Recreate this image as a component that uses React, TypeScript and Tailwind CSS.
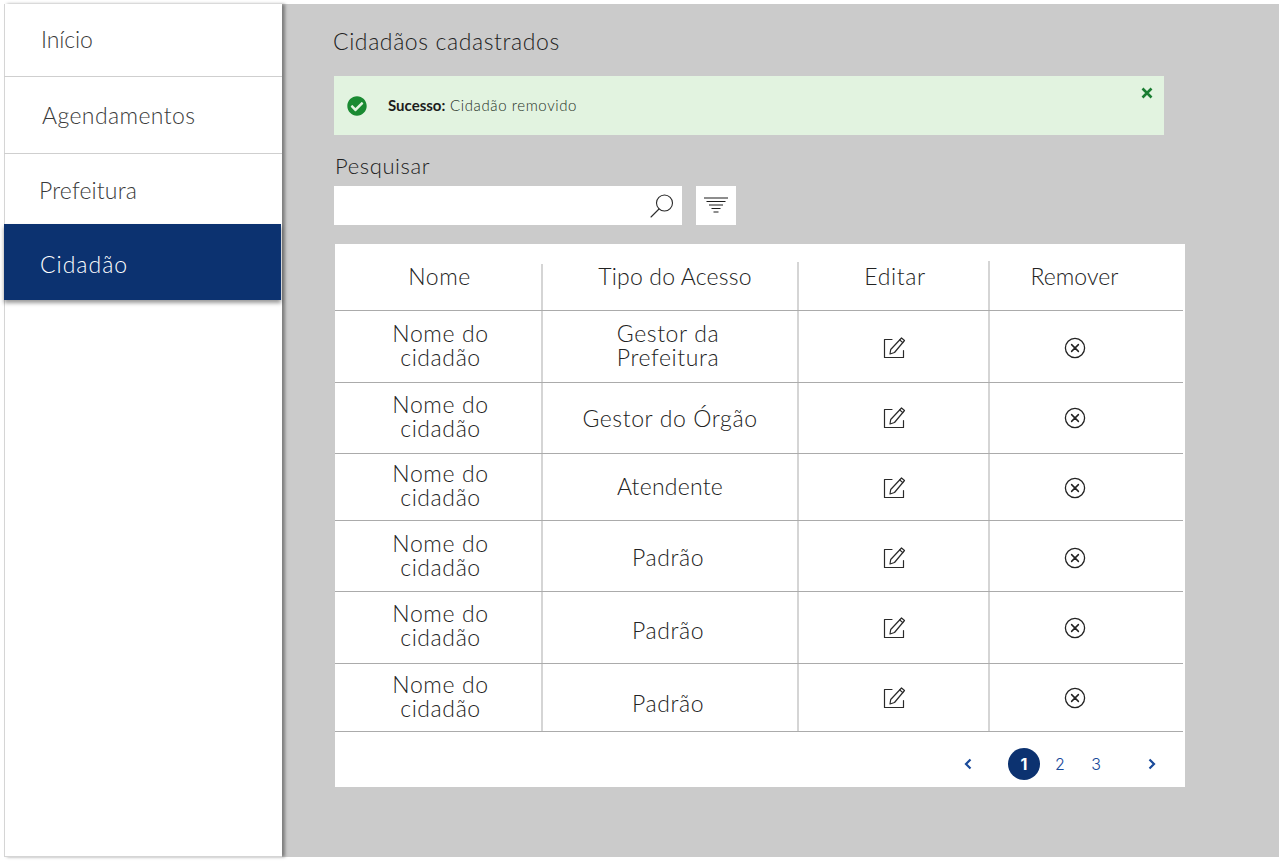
import React from "react";
import { FaCheckCircle } from "react-icons/fa";

const rows = [
    { height: "h-[72px]", nameClass: "pb-[4px]", access: ["Gestor da", "Prefeitura"], accessClass: "pr-[4px] pb-[4px]", iconClass: "pt-[3px]" },
    { height: "h-[71px]", nameClass: "pb-[4px]", access: ["Gestor do Órgão"], accessClass: "pb-[1px]", iconClass: "pb-[1px]" },
    { height: "h-[67px]", nameClass: "pb-[4px]", access: ["Atendente"], accessClass: "pb-[3px] tracking-[0.25px]", iconClass: "pt-[2px]" },
    { height: "h-[71px]", nameClass: "pb-[2px]", access: ["Padrão"], accessClass: "pr-[4px] pt-[1px]", iconClass: "pt-[4px]" },
    { height: "h-[72px]", nameClass: "pb-[6px]", access: ["Padrão"], accessClass: "pr-[4px] pt-[4px]", iconClass: "" },
    { height: "h-[68px]", nameClass: "pb-[4px]", access: ["Padrão"], accessClass: "pr-[4px] pt-[10px]", iconClass: "" },
];

const menu = [
    { label: "Início", className: "h-[73px] border-b border-[#cfcfcf] pl-[37px] pb-[2px] tracking-[-0.1px] text-[#3a3a3a]" },
    { label: "Agendamentos", className: "h-[77px] border-b border-[#cfcfcf] pl-[38px] pt-[1px] tracking-[0.4px] text-[#3a3a3a]" },
    { label: "Prefeitura", className: "h-[70px] pl-[35px] pt-[2px] tracking-[0.15px] text-[#3a3a3a]" },
    { label: "Cidadão", className: "mr-[1px] h-[76px] bg-[#0c3270] pl-[36px] pt-[5px] tracking-[1px] text-white shadow-[0_3px_4px_rgba(0,0,0,0.4)]" },
];

function EditIcon() {
    return (
        <svg width="24" height="24" viewBox="0 0 24 24" fill="none" stroke="#2a2a2a" strokeWidth="1.2" strokeLinecap="round" strokeLinejoin="round">
            <path d="M10 3.5H2.5V21.5H21.5V14.5" />
            <path d="M19.5 2 22.5 4.5 12.5 16.5 8 18 8.7 13.5Z" />
            <path d="M17.8 4 20.8 6.6" />
        </svg>
    );
}

function RemoveIcon() {
    return (
        <svg width="22" height="22" viewBox="0 0 22 22" fill="none" stroke="#222222" strokeWidth="1.3" strokeLinecap="round">
            <circle cx="11" cy="11" r="9.6" />
            <path d="M7.6 7.6 14.4 14.4M14.4 7.6 7.6 14.4" strokeWidth="1.5" />
        </svg>
    );
}

function SearchIcon() {
    return (
        <svg width="26" height="26" viewBox="0 0 26 26" fill="none" stroke="#2a2a2a" strokeWidth="1.1" strokeLinecap="round">
            <circle cx="15.5" cy="10" r="8" />
            <path d="M10 16 2 24" />
        </svg>
    );
}

function FilterIcon() {
    return (
        <svg width="24" height="17" viewBox="0 0 24 17" fill="none" stroke="#1c1c1c" strokeWidth="1.1">
            <path d="M0 1H24M2.500 4.500H21.500M5 8H19M7.500 11.500H16.500M9.500 15H14.500" />
        </svg>
    );
}

function Chevron({ left }: { left?: boolean }) {
    return (
        <svg width="10" height="12" viewBox="0 0 10 12" fill="none" stroke="#1a4a9a" strokeWidth="2.200">
            <path d={left ? "M7.500 1.500 3 6 7.500 10.500" : "M2.500 1.500 7 6 2.500 10.500"} />
        </svg>
    );
}

export default function App() {
    return (
        <div className="h-[861px] w-[1279px] overflow-hidden bg-white p-[4px] pr-0 font-['Lato',sans-serif] font-light">
            <div className="flex h-[853px]">
                <aside className="z-10 w-[278px] shrink-0 border-b border-[#d5d5d5] bg-white shadow-[inset_1px_0_0_#d5d5d5,3px_0_3px_rgba(0,0,0,0.38)]">
                    {menu.map((item) => (
                        <div key={item.label} className={`flex items-center text-[23px] ${item.className}`}>
                            {item.label}
                        </div>
                    ))}
                </aside>

                <main className="flex-1 bg-[#cbcbcb] pl-[52px] text-[#222222]">
                    <h1 className="ml-[-1px] flex h-[72px] items-center pt-[2px] text-[23px] font-light tracking-[0.6px]">Cidadãos cadastrados</h1>

                    <div className="relative flex h-[59px] w-[830px] items-center bg-[#e2f3e0] pl-[13px]">
                        <FaCheckCircle className="text-[20px] text-[#1a8a32]" />
                        <p className="ml-[21px] text-[15px] tracking-[0.6px] text-[#1f2f1f]">
                            <span className="font-bold tracking-[0px] text-[#1c1c1c]">Sucesso:</span> Cidadão removido
                        </p>
                        <svg className="absolute right-[11px] top-[11px]" width="12" height="12" viewBox="0 0 12 12" fill="none" stroke="#1a7d32" strokeWidth="2.600">
                            <path d="M1.500 1.500 10.500 10.500M10.500 1.500 1.500 10.500" />
                        </svg>
                    </div>

                    <label className="ml-[1px] flex h-[51px] items-end pb-[4px] text-[22px] tracking-[0.6px]">Pesquisar</label>
                    <div className="flex h-[39px] gap-[14px]">
                        <div className="flex w-[348px] items-center justify-end bg-white pr-[7px]">
                            <SearchIcon />
                        </div>
                        <div className="flex w-[40px] items-center justify-center bg-white">
                            <FilterIcon />
                        </div>
                    </div>

                    <div className="ml-[1px] mt-[19px] w-[850px] bg-white pr-[2px]">
                        <div className="flex h-[67px] border-b border-[#ababab] text-[23px] tracking-[0.6px]">
                            <div className="flex w-[206px] items-center justify-center pb-[2px] pl-[3px]">Nome</div>
                            <div className="mt-[20px] w-[2px] bg-[#d5d5d5]" />
                            <div className="flex w-[254px] items-center justify-center pb-[2px] pl-[10px] tracking-[0.17px]">Tipo do Acesso</div>
                            <div className="mt-[18px] w-[2px] bg-[#d5d5d5]" />
                            <div className="flex w-[189px] items-center justify-center pb-[2px] pl-[3px]">Editar</div>
                            <div className="mt-[17px] w-[2px] bg-[#d5d5d5]" />
                            <div className="flex flex-1 items-center justify-center pb-[2px] pr-[24px] tracking-[0.05px]">Remover</div>
                        </div>

                        {rows.map((row, i) => (
                            <div key={i} className={`flex border-b border-[#ababab] text-[23px] leading-[24px] tracking-[0.6px] ${row.height}`}>
                                <div className={`flex w-[206px] items-center justify-center pl-[5px] text-center ${row.nameClass}`}>
                                    <div>Nome do<br />cidadão</div>
                                </div>
                                <div className="w-[2px] bg-[#d5d5d5]" />
                                <div className={`flex w-[254px] items-center justify-center text-center ${row.accessClass}`}>
                                    <div>
                                        {row.access.map((line) => (
                                            <div key={line}>{line}</div>
                                        ))}
                                    </div>
                                </div>
                                <div className="w-[2px] bg-[#d5d5d5]" />
                                <div className={`flex w-[189px] items-center justify-center ${row.iconClass}`}>
                                    <EditIcon />
                                </div>
                                <div className="w-[2px] bg-[#d5d5d5]" />
                                <div className={`flex flex-1 items-center justify-center pr-[24px] ${row.iconClass}`}>
                                    <RemoveIcon />
                                </div>
                            </div>
                        ))}

                        <div className="flex h-[55px] items-center justify-end pr-[26px] pt-[8px] font-['Inter',sans-serif] text-[16px] font-light text-[#1a4a9a]">
                            <Chevron left />
                            <div className="ml-[35px] flex h-[32px] w-[32px] items-center justify-center rounded-full bg-[#0c3270] font-bold text-white">1</div>
                            <span className="flex w-[40px] justify-center">2</span>
                            <span className="flex w-[32px] justify-center">3</span>
                            <span className="ml-[35px]"><Chevron /></span>
                        </div>
                    </div>
                </main>
            </div>
        </div>
    );
}
